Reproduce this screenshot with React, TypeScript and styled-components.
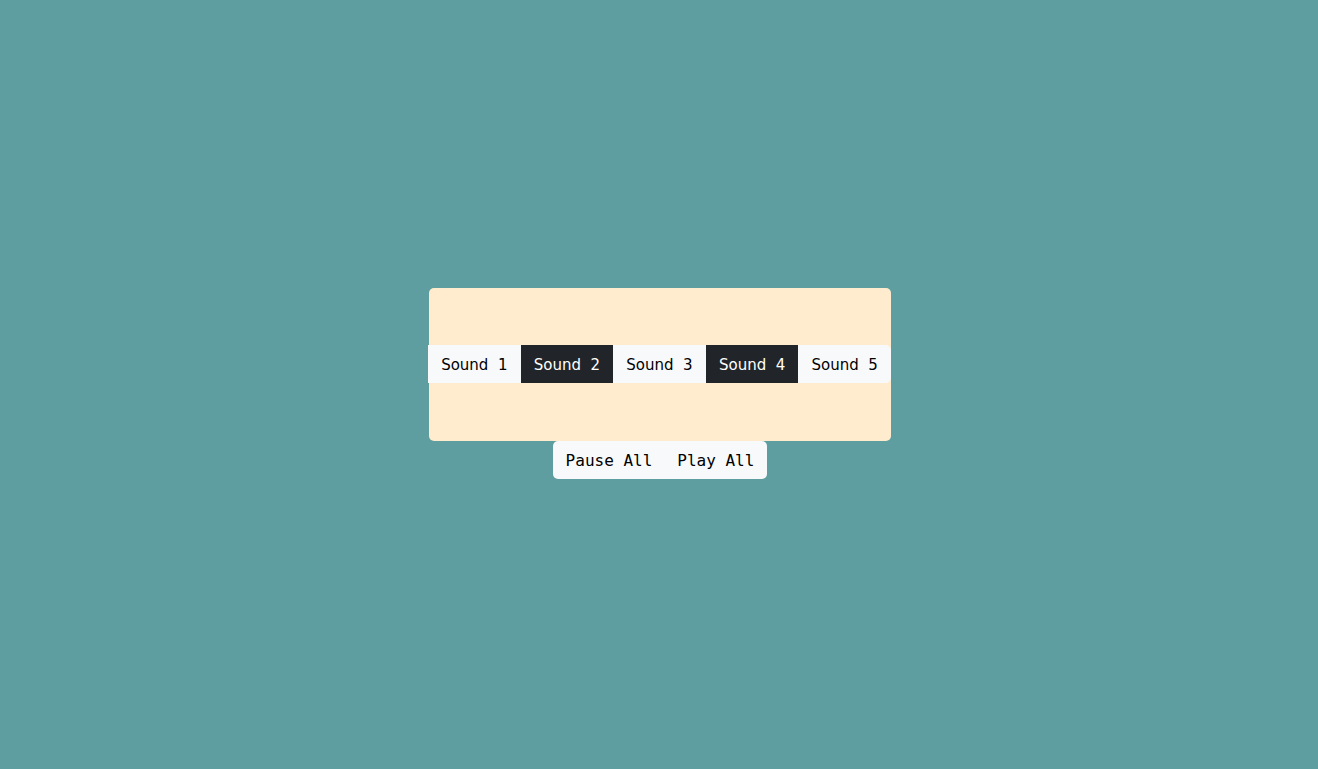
import styled, { createGlobalStyle } from "styled-components";

const sounds = [
  { name: "Sound  1", active: false },
  { name: "Sound  2", active: true },
  { name: "Sound  3", active: false },
  { name: "Sound  4", active: true },
  { name: "Sound  5", active: false },
];

const GlobalStyle = createGlobalStyle`
  html, body {
    margin: 0;
    padding: 0;
    background: #5f9ea0;
  }
`;

export default function App() {
  return (
    <>
      <GlobalStyle />
      <Page>
        <Board>
          <SoundGroup>
            {sounds.map((s, i) => (
              <SoundButton key={`sound${i}`} $dark={s.active} $last={i === sounds.length - 1}>
                {s.name}
              </SoundButton>
            ))}
          </SoundGroup>
        </Board>
        <Controls>
          <ControlButton>Pause All</ControlButton>
          <ControlButton>Play All</ControlButton>
        </Controls>
      </Page>
    </>
  );
}

const Page = styled.div`
  min-height: 769px;
  display: flex;
  flex-direction: column;
  align-items: center;
  justify-content: center;
  padding: 0 0 3px 2px;
  box-sizing: border-box;
`;

const Board = styled.div`
  width: 462px;
  height: 153px;
  background: #ffebcd;
  border-radius: 5px;
  display: flex;
  align-items: center;
  justify-content: center;
`;

const SoundGroup = styled.div`
  display: flex;
  flex-shrink: 0;
  margin-left: -1px;
`;

const SoundButton = styled.button<{ $dark: boolean; $last: boolean }>`
  font-family: "DejaVu Sans", sans-serif;
  font-size: 15px;
  height: 38px;
  padding: 2px 12.15px 0;
  border: 1px solid ${(p) => (p.$dark ? "#212529" : "#f8f9fa")};
  background: ${(p) => (p.$dark ? "#212529" : "#f8f9fa")};
  color: ${(p) => (p.$dark ? "#fff" : "#000")};
  border-radius: ${(p) => (p.$last ? "0 5px 5px 0" : "0")};
  white-space: pre;
`;

const Controls = styled.div`
  display: flex;
  background: #f8f9fa;
  border-radius: 5px;
`;

const ControlButton = styled.button`
  font-family: "DejaVu Sans Mono", monospace;
  font-size: 16px;
  height: 38px;
  padding: 2px 13px 0;
  border: none;
  background: transparent;
  color: #000;
  & + & {
    margin-left: -1px;
  }
`;
